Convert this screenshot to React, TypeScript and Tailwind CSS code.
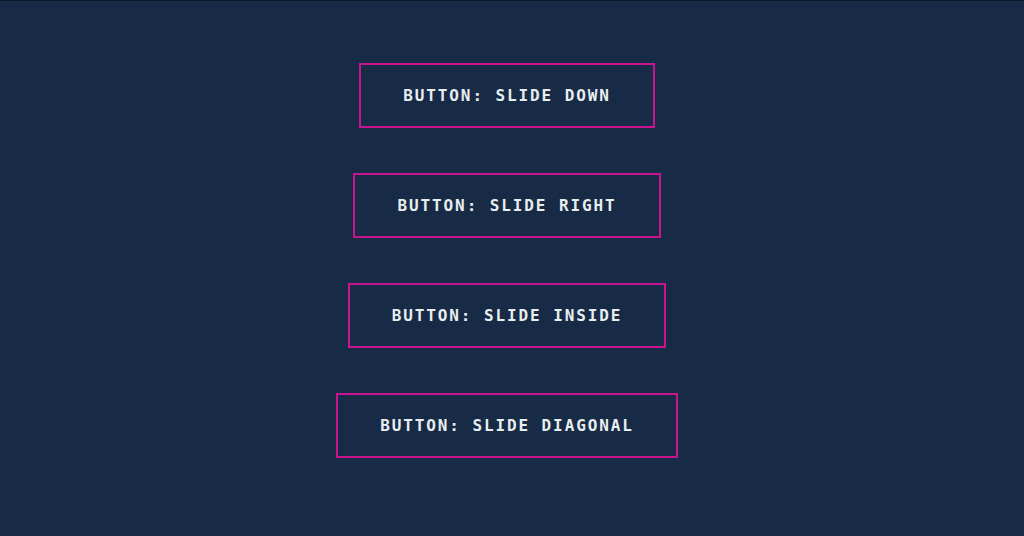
import React from 'react';

const buttons = [
  'Button: Slide Down',
  'Button: Slide Right',
  'Button: Slide Inside',
  'Button: Slide Diagonal',
];

export default function App() {
  return (
    <div className="min-h-[536px] w-full bg-[#172a46] border-t border-[#0f1a2b]">
      <div className="w-[1014px] flex flex-col items-center gap-[45px] pt-[62px]">
        {buttons.map((label) => (
          <button
            key={label}
            className="h-[65px] px-[42px] border-2 border-[#c8158f] bg-transparent text-[#e8eef0] uppercase text-[16px] font-bold tracking-[1.9px] leading-none"
            style={{ fontFamily: '"DejaVu Sans Mono", "Liberation Mono", monospace' }}
          >
            {label}
          </button>
        ))}
      </div>
    </div>
  );
}
